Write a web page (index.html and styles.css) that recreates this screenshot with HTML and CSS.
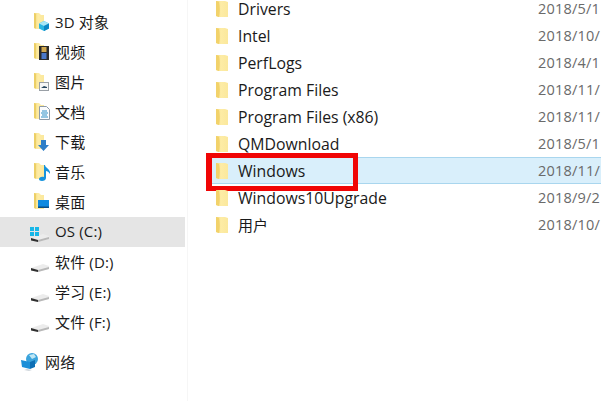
FILE: index.html
```html
<!DOCTYPE html>
<html lang="zh-CN">
<head>
<meta charset="utf-8">
<title>Explorer</title>
<link rel="stylesheet" href="styles.css">
</head>
<body>
<svg class="defs" width="0" height="0" aria-hidden="true">
  <defs>
    <linearGradient id="fold" x1="0" y1="0" x2="1" y2="0">
      <stop offset="0" stop-color="#f3d673"/>
      <stop offset=".4" stop-color="#fdeca6"/>
      <stop offset="1" stop-color="#fbe89c"/>
    </linearGradient>
    <symbol id="qa" viewBox="0 0 16 18">
      <path d="M1 1h5l2 2h3v14H4l-3-1z" fill="url(#fold)"/>
      <path d="M1 1v15l2 .7V2z" fill="#eccf66"/>
    </symbol>
    <symbol id="folder" viewBox="0 0 14 18">
      <path d="M0 1h9l3 1v15H3l-3-1z" fill="url(#fold)"/>
      <path d="M0 1v15l3 1c1-5 1-10 0-15z" fill="#f2d26a"/>
    </symbol>
    <symbol id="drive" viewBox="0 0 20 10">
      <path d="M1 5 13 1l6 2v3L7 9 1 7z" fill="#ececec"/>
      <path d="M1 5l7 2v2L1 7.500z" fill="#2f2f2f"/>
      <path d="M8 7l11-3v2L8 9z" fill="#b8b8b8"/>
    </symbol>
  </defs>
</svg>
<div class="window">
  <nav class="sidebar">
    <div class="nav-row"><span class="nav-icon"><svg class="qa" width="16" height="18"><use href="#qa"/></svg><svg class="badge" width="12" height="12" viewBox="0 0 12 12"><path d="M6 1l5 2.500v5L6 11 1 8.500v-5z" fill="#2bb5e0"/><path d="M6 1l5 2.500L6 6 1 3.500z" fill="#a8e6f5"/><path d="M6 6l5-2.500v5L6 11z" fill="#0c86c4"/></svg></span><span class="nav-label">3D 对象</span></div>
    <div class="nav-row"><span class="nav-icon"><svg class="qa" width="16" height="18"><use href="#qa"/></svg><svg class="badge film" width="10" height="14" viewBox="0 0 10 14"><rect width="10" height="14" fill="#2b2b2b"/><rect x="2.500" y="1" width="5" height="5" fill="#d0a850"/><rect x="2.500" y="7" width="5" height="6" fill="#4a78c8"/></svg></span><span class="nav-label">视频</span></div>
    <div class="nav-row"><span class="nav-icon"><svg class="qa" width="16" height="18"><use href="#qa"/></svg><svg class="badge pic" width="10" height="9" viewBox="0 0 10 9"><rect x=".5" y=".5" width="9" height="8" fill="#f7f7f7" stroke="#9aa0a6"/><path d="M2 6l3-2 3 1v1z" fill="#28465f"/></svg></span><span class="nav-label">图片</span></div>
    <div class="nav-row"><span class="nav-icon"><svg class="qa" width="16" height="18"><use href="#qa"/></svg><svg class="badge doc" width="11" height="14" viewBox="0 0 11 14"><path d="M.5.500h7l3 3v10H.5z" fill="#fbfcfe" stroke="#8d9aa8"/><path d="M3 5h5M2 7h7M3 9h5M2 11h7" stroke="#2f8fc6"/></svg></span><span class="nav-label">文档</span></div>
    <div class="nav-row"><span class="nav-icon"><svg class="qa" width="16" height="18"><use href="#qa"/></svg><svg class="badge" width="11" height="11" viewBox="0 0 11 11"><path d="M3 0h5v5h3l-5.500 6L0 5h3z" fill="#2f7fc8"/></svg></span><span class="nav-label">下载</span></div>
    <div class="nav-row"><span class="nav-icon"><svg class="qa" width="16" height="18"><use href="#qa"/></svg><svg class="badge note" width="12" height="18" viewBox="0 0 12 18"><path d="M5 1h1c0 3 6 4 5 9-1-2-3-3-4-3v7c0 2-2 3-4 3s-3-1-3-2 2-3 5-2z" fill="#1593dd"/></svg></span><span class="nav-label">音乐</span></div>
    <div class="nav-row"><span class="nav-icon"><svg class="qa" width="16" height="18"><use href="#qa"/></svg><svg class="badge" width="11" height="8" viewBox="0 0 11 8"><rect width="11" height="8" fill="#0f8ae0"/><rect y="6.500" width="11" height="1.500" fill="#0b4f86"/></svg></span><span class="nav-label">桌面</span></div>
    <div class="nav-row selected"><span class="nav-icon"><svg class="drive-icon" width="20" height="10"><use href="#drive"/></svg><svg class="win" width="9" height="9" viewBox="0 0 9 9"><path d="M0 0h4v4H0zM5 0h4v4H5zM0 5h4v4H0zM5 5h4v4H5z" fill="#17b7e8"/></svg></span><span class="nav-label">OS (C:)</span></div>
    <div class="nav-row"><span class="nav-icon"><svg class="drive-icon" width="20" height="10"><use href="#drive"/></svg></span><span class="nav-label">软件 (D:)</span></div>
    <div class="nav-row"><span class="nav-icon"><svg class="drive-icon" width="20" height="10"><use href="#drive"/></svg></span><span class="nav-label">学习 (E:)</span></div>
    <div class="nav-row"><span class="nav-icon"><svg class="drive-icon" width="20" height="10"><use href="#drive"/></svg></span><span class="nav-label">文件 (F:)</span></div>
    <div class="nav-row network"><span class="net-icon"><svg width="19" height="20" viewBox="0 0 19 20"><circle cx="12" cy="7" r="6" fill="#3aa3dc"/><path d="M9 3l5-1 2 3-4 2z" fill="#bfe7f5"/><path d="M1 8l9 2v7l-8-2z" fill="#1c8fd8"/><path d="M10 10l5-2v7l-5 2z" fill="#0d6fb5"/><path d="M4 18l5 1 3-1-5-1z" fill="#cfd6dc"/></svg></span><span class="nav-label">网络</span></div>
  </nav>
  <main class="files">
    <div class="file-row"><svg class="folder" width="14" height="18"><use href="#folder"/></svg><span class="name">Drivers</span><span class="date">2018/5/1</span></div>
    <div class="file-row"><svg class="folder" width="14" height="18"><use href="#folder"/></svg><span class="name">Intel</span><span class="date">2018/10/</span></div>
    <div class="file-row"><svg class="folder" width="14" height="18"><use href="#folder"/></svg><span class="name">PerfLogs</span><span class="date">2018/4/1</span></div>
    <div class="file-row"><svg class="folder" width="14" height="18"><use href="#folder"/></svg><span class="name">Program Files</span><span class="date">2018/11/</span></div>
    <div class="file-row"><svg class="folder" width="14" height="18"><use href="#folder"/></svg><span class="name">Program Files (x86)</span><span class="date">2018/11/</span></div>
    <div class="file-row"><svg class="folder" width="14" height="18"><use href="#folder"/></svg><span class="name">QMDownload</span><span class="date">2018/5/1</span></div>
    <div class="file-row active"><svg class="folder" width="14" height="18"><use href="#folder"/></svg><span class="name">Windows</span><span class="date">2018/11/</span><div class="callout"></div></div>
    <div class="file-row"><svg class="folder" width="14" height="18"><use href="#folder"/></svg><span class="name">Windows10Upgrade</span><span class="date">2018/9/2</span></div>
    <div class="file-row"><svg class="folder" width="14" height="18"><use href="#folder"/></svg><span class="name cjk">用户</span><span class="date">2018/10/</span></div>
  </main>
</div>
</body>
</html>
```
FILE: styles.css
```css
html, body {
  margin: 0;
  padding: 0;
  width: 601px;
  height: 401px;
  overflow: hidden;
  background: #fff;
}
.defs { position: absolute; }
.window {
  display: flex;
  width: 601px;
  height: 401px;
  overflow: hidden;
  font-family: "Open Sans", "Noto Sans CJK SC", sans-serif;
  font-size: 15px;
  color: #1a1a1a;
}
.sidebar {
  width: 185px;
  flex: none;
  padding-top: 7px;
  margin-right: 2px;
}
.nav-row {
  display: flex;
  align-items: center;
  height: 30px;
}
.nav-row.selected { background: #e5e5e5; }
.nav-icon {
  position: relative;
  width: 25px;
  height: 20px;
  margin-left: 30px;
  flex: none;
}
.nav-label { padding-bottom: 2px; white-space: nowrap; letter-spacing: .15px; }
.qa { position: absolute; left: 3px; top: 0; }
.badge { position: absolute; left: 8px; top: 8px; }
.film { left: 9px; top: 4px; }
.pic { left: 9px; top: 10px; }
.doc { left: 9px; top: 4px; }
.note { left: 9px; top: 2px; }
.drive-icon { position: absolute; left: 0; top: 11px; }
.win { position: absolute; left: 0; top: 5px; }
.network { margin-top: 10px; }
.net-icon { width: 19px; height: 20px; margin-left: 20px; margin-right: 6px; flex: none; display: flex; }
.files {
  flex: 1;
  min-width: 0;
  margin-top: -5px;
  padding-left: 20px;
  border-left: 1px solid #f6f6f6;
}
.file-row {
  position: relative;
  display: flex;
  align-items: center;
  height: 27px;
  box-sizing: border-box;
  padding-left: 8px;
  white-space: nowrap;
}
.folder { flex: none; }
.name { margin-left: 8px; width: 300px; flex: none; font-size: 15.8px; line-height: 16px; padding-top: 1px; }
.name.cjk { font-size: 15px; padding-top: 0; }
.date { color: #6a6a6a; font-size: 14.5px; letter-spacing: .2px; }
.file-row.active {
  background: #d9effb;
  border-top: 1px solid #a9d6ee;
  border-bottom: 1px solid #a9d6ee;
}
.callout {
  position: absolute;
  left: -2px;
  top: -5px;
  width: 152px;
  height: 38px;
  border: 5px solid #f00505;
  border-left-width: 6px;
  box-sizing: border-box;
}
```
